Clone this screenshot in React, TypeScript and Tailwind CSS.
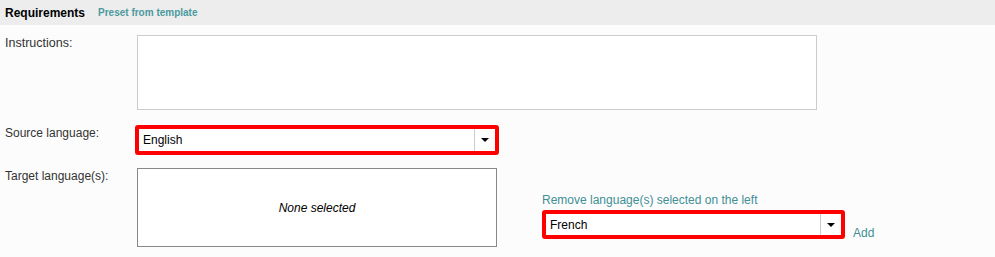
export default function App() {
  const font = "font-['Liberation_Sans',Arial,sans-serif]";

  return (
    <div className={`${font} w-full h-[257px] bg-[#fcfcfc] text-[#333]`}>
      {/* header bar */}
      <div className="h-[25px] bg-[#ededed] flex items-center px-[5px]">
        <span className="text-[12px] font-bold text-black">Requirements</span>
        <span className="ml-[13px] text-[10px] font-bold text-[#4b9a9e]">Preset from template</span>
      </div>

      <div className="px-[5px] pt-[10px]">
        {/* Instructions */}
        <div className="flex">
          <div className="w-[132px] text-[12.5px] leading-[14px] pt-[1px]">Instructions:</div>
          <textarea className="w-[680px] h-[75px] border border-[#cccccc] bg-white resize-none outline-none" />
        </div>

        {/* Source language */}
        <div className="flex mt-[15px]">
          <div className="w-[130px] text-[12px] leading-[14px] pt-[1px]">Source language:</div>
          <div className="w-[364px] h-[30px] border-[4px] border-[#ff0000] rounded-[3px] bg-white flex">
            <div className="flex-1 flex items-center pl-[4px] text-[12px] text-black">English</div>
            <div className="w-[21px] border-l border-[#cccccc] flex items-center justify-center">
              <span className="w-0 h-0 border-l-[4px] border-r-[4px] border-t-[4px] border-l-transparent border-r-transparent border-t-black" />
            </div>
          </div>
        </div>

        {/* Target languages */}
        <div className="flex mt-[13px]">
          <div className="w-[132px] text-[12px] leading-[14px] pt-[1px]">Target language(s):</div>
          <div className="w-[360px] h-[79px] border border-[#888888] bg-white flex items-center justify-center">
            <span className="text-[12px] italic text-black">None selected</span>
          </div>
          <div className="ml-[45px] pt-[25px]">
            <div className="text-[12px] leading-[14px] text-[#3f8f95]">Remove language(s) selected on the left</div>
            <div className="flex items-end mt-[3px]">
              <div className="w-[303px] h-[29px] border-[4px] border-[#ff0000] rounded-[3px] bg-white flex">
                <div className="flex-1 flex items-center pl-[4px] text-[12px] text-black">French</div>
                <div className="w-[21px] border-l border-[#cccccc] flex items-center justify-center">
                  <span className="w-0 h-0 border-l-[4px] border-r-[4px] border-t-[4px] border-l-transparent border-r-transparent border-t-black" />
                </div>
              </div>
              <span className="ml-[8px] mb-[-3px] text-[12px] text-[#3f8f95]">Add</span>
            </div>
          </div>
        </div>
      </div>
    </div>
  );
}
